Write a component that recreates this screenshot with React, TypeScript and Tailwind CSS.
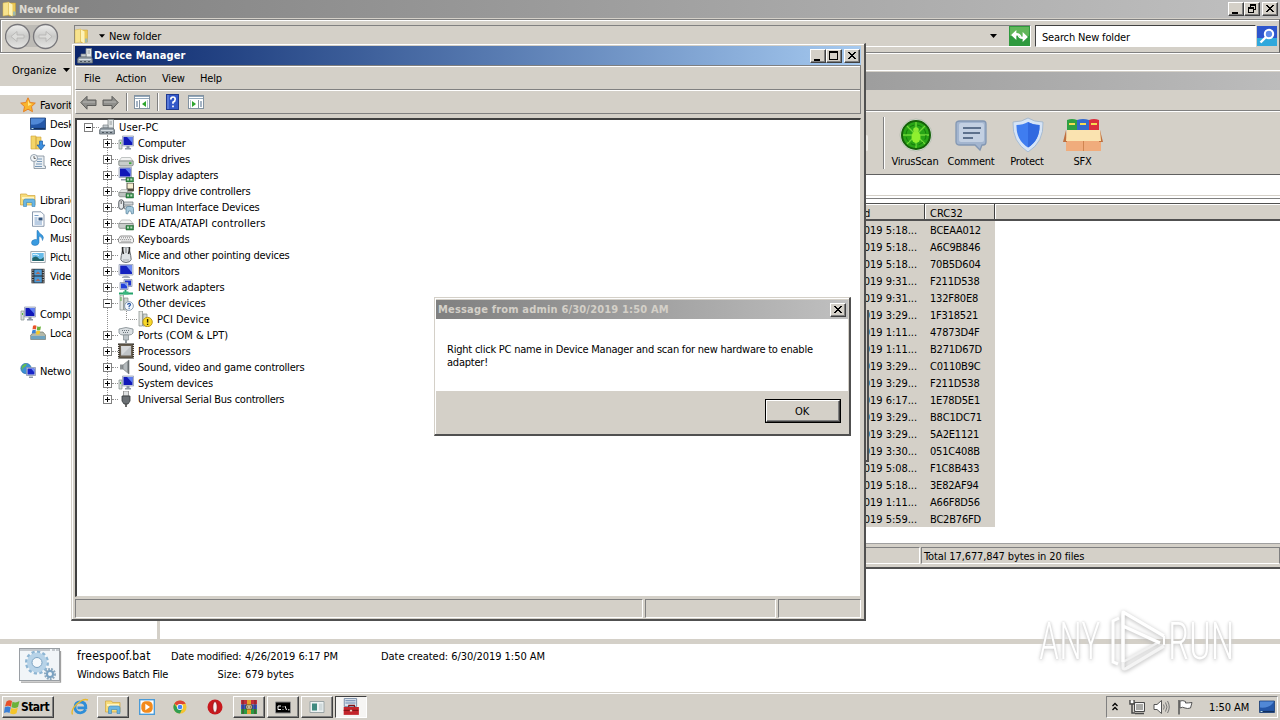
import type { ReactNode } from "react";

type IconProps = { className?: string };
type Glyph = (p: IconProps) => ReactNode;

const S = ({ children, className = "", box = "0 0 16 16" }: { children: ReactNode; className?: string; box?: string }) => (
  <svg viewBox={box} className={`block shrink-0 ${className || "h-4 w-4"}`}>
    {children}
  </svg>
);

/* ---------- small icons ---------- */

const FolderTall: Glyph = (p) => (
  <S {...p}>
    <path d="M1 2l6-1v13l-6 1z" fill="#f7e38e" stroke="#d9b547" strokeWidth=".5" />
    <path d="M7 2h6.500v12L7 15z" fill="#ecc957" stroke="#c99e2f" strokeWidth=".5" />
    <path d="M7 1.500l3.500 2v12l-3.500-2z" fill="#fdf3b8" />
    <path d="M11 10.500h2.500v4H11z" fill="#9cb9b0" />
  </S>
);
const Tower: Glyph = (p) => (
  <S {...p}>
    <path d="M9 .5h5.500V10H9z" fill="#e4e8e8" stroke="#7d8788" strokeWidth=".8" />
    <path d="M10.500 3h2.500M10.500 5h2.500" stroke="#7d8788" strokeWidth=".8" />
    <path d="M4 6h5v3H4z" fill="#c5ccd0" stroke="#7b8388" strokeWidth=".7" />
    <path d="M2 9h12l1.500 2v4H.6v-4z" fill="#99a3ab" stroke="#5d676e" strokeWidth=".8" />
    <path d="M2 11.500h12" stroke="#d9e0e4" />
    <path d="M3 13.500h2M7 13.500h2M11 13.500h2" stroke="#4c565e" />
  </S>
);
const Pc: Glyph = (p) => (
  <S {...p}>
    <path d="M1 5h3v9H1z" fill="#d8dedb" stroke="#84908d" strokeWidth=".7" />
    <path d="M2 7h1v2H2z" fill="#55bb3c" />
    <path d="M4.500 1h11v10h-11z" fill="#d5dbe8" stroke="#8d97ad" strokeWidth=".7" />
    <path d="M5.500 2h9v8h-9z" fill="#1018b8" />
    <path d="M9 2h5.500v6z" fill="#5c7df2" />
    <path d="M8.500 11h3v2h-3zM7 13h6v1.400H7z" fill="#8e99a8" />
  </S>
);
const Disk: Glyph = (p) => (
  <S {...p}>
    <path d="M3.500 6.500h9L15 10H1z" fill="#f2f3f2" stroke="#9aa09f" strokeWidth=".6" />
    <path d="M.8 10h14.400v4l-1 1H1.800l-1-1z" fill="#c9cdcb" stroke="#777d7b" strokeWidth=".8" />
    <path d="M11 11.300h2.500v1.800H11z" fill="#3ca53a" />
  </S>
);
const Card = () => (
  <g>
    <path d="M8 10.500h7.500V15H8z" fill="#2e8b45" stroke="#1c5b2b" strokeWidth=".5" />
    <path d="M9 11.500h2v2H9zM12.300 11.500h2v2h-2z" fill="#b9d8bd" />
  </g>
);
const Display: Glyph = (p) => (
  <S {...p}>
    <path d="M1 .5h12.500v10H1z" fill="#d5dbe8" stroke="#8d97ad" strokeWidth=".7" />
    <path d="M2 1.500h10.500v8H2z" fill="#1018b8" />
    <path d="M7 1.500h5.500v6z" fill="#5c7df2" />
    <path d="M3 12h6v1.500H3z" fill="#8e99a8" />
    <Card />
  </S>
);
const Floppy: Glyph = (p) => (
  <S {...p}>
    <path d="M9 0h6.500v8H9z" fill="#f5edcf" stroke="#4d4a40" strokeWidth=".9" />
    <path d="M9 5.500h6.500V8H9z" fill="#4d4a40" />
    <path d="M3.500 6.500h6v3H1z" fill="#e4e6e5" stroke="#9aa09f" strokeWidth=".5" />
    <path d="M.8 9.500h13V13l-1 .8h-11l-1-.8z" fill="#bdc2c0" stroke="#777d7b" strokeWidth=".7" />
    <Card />
  </S>
);
const Hid: Glyph = (p) => (
  <S {...p}>
    <rect x=".8" y=".8" width="4.800" height="9.500" rx="2.400" fill="#e6e9ec" stroke="#50565c" strokeWidth="1" />
    <path d="M3.200 2v3" stroke="#333" strokeWidth=".8" />
    <path d="M6 3h9v3H6zM6.500 7h6v3h-6z" fill="#d3d7da" stroke="#6c7378" strokeWidth=".7" />
    <path d="M8 14.500V9.500q0-2 2-2h3.500q2 0 2 2v5l-1.800.5-1-3h-2l-1 3z" fill="#a7c9dc" stroke="#54819b" strokeWidth=".7" />
  </S>
);
const Ide: Glyph = (p) => (
  <S {...p}>
    <path d="M3.500 5h8.500l3 3.500H1z" fill="#f2f3f2" stroke="#9aa09f" strokeWidth=".6" />
    <path d="M.8 8.500h14.400v4l-1 .8H1.800l-1-.8z" fill="#c9cdcb" stroke="#777d7b" strokeWidth=".7" />
    <Card />
  </S>
);
const Keyb: Glyph = (p) => (
  <S {...p}>
    <path d="M2.500 5h11L15.500 8v3l-1 .8h-13l-1-.8V8z" fill="#f2f2f2" stroke="#777" strokeWidth=".8" />
    <path d="M3 6.800h10M2.200 8.600h11.600" stroke="#777" strokeWidth=".9" strokeDasharray="1 1" />
    <path d="M3 10.300h10" stroke="#999" strokeWidth=".7" />
  </S>
);
const Mouse: Glyph = (p) => (
  <S {...p}>
    <path d="M4.500 0v3Q3 9 2.800 12.500q1 3 5.200 3t5.200-3Q13 9 11.500 3V0z" fill="#dfe3e6" stroke="#5a5f64" strokeWidth=".9" />
    <path d="M4.600 0q-.3 4 .9 7M11.400 0q.3 4-.9 7" fill="none" stroke="#2a2a2a" strokeWidth="1.600" />
    <path d="M8 1v5" stroke="#777" />
    <path d="M5 13h6" stroke="#a9aeb2" />
  </S>
);
const Monitor: Glyph = (p) => (
  <S {...p}>
    <path d="M1 1.500h14v10.500H1z" fill="#dfe5f0" stroke="#8d97ad" strokeWidth=".7" />
    <path d="M2.200 2.500h11.800V11H2.200z" fill="#1422c0" />
    <path d="M8 2.500h6v7z" fill="#6f8df5" />
    <path d="M4 14q4-3 8 0v1H4z" fill="#a3adbb" />
  </S>
);
const NetAd: Glyph = (p) => (
  <S {...p}>
    <path d="M6 .5h8v7H6z" fill="#d5dbe8" stroke="#7f8ba5" strokeWidth=".7" />
    <path d="M7 1.500h6v5H7z" fill="#1f35cf" />
    <path d="M2 3.500h8v7H2z" fill="#d5dbe8" stroke="#7f8ba5" strokeWidth=".7" />
    <path d="M3 4.500h6v5H3z" fill="#2240d8" />
    <path d="M6 4.500h3v3z" fill="#7d9cf8" />
    <path d="M7.500 11v2M1 14.500h14" stroke="#25a36b" strokeWidth="1.800" />
    <path d="M5 12.500h5.500v3H5z" fill="#39b780" />
  </S>
);
const Other: Glyph = (p) => (
  <S {...p}>
    <path d="M2 0h3.500v15H2z" fill="#e3e6e4" stroke="#818a87" strokeWidth=".7" />
    <path d="M6 3h4v12H6z" fill="#cfd6d3" stroke="#818a87" strokeWidth=".7" />
    <path d="M3 2v4" stroke="#56b246" />
    <circle cx="11" cy="11" r="4.400" fill="#f3f8fd" stroke="#7a8da5" strokeWidth=".8" />
    <path d="M9.600 9.900q.2-1.500 1.500-1.500t1.400 1.200q0 .9-1.400 1.700v.6M11.100 12.700v1" stroke="#2a58a8" strokeWidth="1.200" fill="none" />
  </S>
);
const Warn: Glyph = (p) => (
  <S {...p}>
    <path d="M2 0h3.500v15H2z" fill="#e3e6e4" stroke="#818a87" strokeWidth=".7" />
    <path d="M6 3h4v12H6z" fill="#cfd6d3" stroke="#818a87" strokeWidth=".7" />
    <circle cx="10.600" cy="11" r="4.700" fill="#f8d92a" stroke="#b58f14" strokeWidth=".9" />
    <path d="M10.600 8v3.500M10.600 12.700v1.200" stroke="#2a2200" strokeWidth="1.400" />
  </S>
);
const Port: Glyph = (p) => (
  <S {...p}>
    <path d="M1 2q7-3 14 0v4q-1 2-4 2H5Q2 8 1 6z" fill="#d9dee1" stroke="#7f888d" strokeWidth=".8" />
    <path d="M4 3.500h8M5 5.500h6" stroke="#69737a" strokeDasharray="1 1" />
    <path d="M5.500 8h5v5h-5z" fill="#bfc6ca" stroke="#7f888d" strokeWidth=".7" />
    <path d="M7 13h2v3H7z" fill="#8e979c" />
  </S>
);
const Cpu: Glyph = (p) => (
  <S {...p}>
    <path d="M.8 1h14.400v14H.8z" fill="#6a6052" />
    <path d="M.5 .8h15M.5 15.200h15M.8 1v14M15.200 1v14" stroke="#29241d" strokeWidth="1.400" strokeDasharray="1 1" />
    <path d="M3 3h10v9.500H3z" fill="#bfc3c6" />
    <path d="M3 3h10L4 12z" fill="#d6d8da" />
  </S>
);
const Speaker: Glyph = (p) => (
  <S {...p}>
    <path d="M2 5.500h3v5H2z" fill="#8d9295" />
    <path d="M5 6l6-5v14l-6-5z" fill="#b4babd" stroke="#6d7376" strokeWidth=".6" />
    <path d="M9.500 3L11 1v14l-1.500-2z" fill="#676d70" />
  </S>
);
const Usb: Glyph = (p) => (
  <S {...p}>
    <path d="M5.500 0h5v5h-5z" fill="#dfe1e2" stroke="#777" strokeWidth=".7" />
    <path d="M4 5h8v5l-2 3H6l-2-3z" fill="#6a6f73" stroke="#34383b" strokeWidth=".8" />
    <path d="M7.200 13h1.600v3H7.200z" fill="#444" />
  </S>
);
const Star: Glyph = (p) => (
  <S {...p}>
    <path d="M8 .8l2.200 4.700 5.100.6-3.800 3.500 1 5.100L8 12.200l-4.500 2.500 1-5.100L.7 6.100l5.100-.6z" fill="#f9b52c" stroke="#e5791b" strokeWidth=".9" />
    <path d="M8 3l1.300 3.300L12 7 8 9z" fill="#ffe787" />
  </S>
);
const Desk: Glyph = (p) => (
  <S {...p}>
    <path d="M.5 2h15v11.500H.5z" fill="#2457a8" stroke="#193c72" strokeWidth=".8" />
    <path d="M1 2.500h14q-4 7-14 6z" fill="#5088d6" />
    <path d="M1 12.500h14" stroke="#11305f" strokeWidth="1.200" />
    <path d="M1.500 12.500h2" stroke="#b8e0f0" />
  </S>
);
const Down: Glyph = (p) => (
  <S {...p}>
    <path d="M1 1h5v13H1zM6 2h5v12H6z" fill="#f4d568" stroke="#cda13a" strokeWidth=".6" />
    <path d="M9.500 6h3v4h2.500L11 15 7 10h2.500z" fill="#3d8fdf" stroke="#1d5ca2" strokeWidth=".7" />
  </S>
);
const Recent: Glyph = (p) => (
  <S {...p}>
    <path d="M4 2h10v10h1.500v2.500H4z" fill="#e9eef2" stroke="#7d8b97" strokeWidth=".8" />
    <path d="M7 5h5M7 7.500h5M6 10h6M5 12.500h7" stroke="#6a8cb0" strokeWidth=".9" />
    <circle cx="4" cy="4" r="3.500" fill="#f4f7f9" stroke="#8d9ba7" strokeWidth=".9" />
    <path d="M4 2v2.400h1.800" stroke="#444" strokeWidth=".8" fill="none" />
  </S>
);
const Lib: Glyph = (p) => (
  <S {...p}>
    <path d="M.5 2h6l1 1.500h7.500V13H.5z" fill="#f7dc7a" stroke="#cfa33c" strokeWidth=".7" />
    <path d="M2 5h12v2H2z" fill="#fff4c0" />
    <path d="M3.500 14.500V9q0-2 2-2H13q2 0 2 2v5.500h-3v-4H6.500v4z" fill="#69b5e3" stroke="#3b85b5" strokeWidth=".6" />
  </S>
);
const Doc: Glyph = (p) => (
  <S {...p}>
    <path d="M2.500 .8h8.500l3 3v11.500H2.500z" fill="#fafcfe" stroke="#6f8299" strokeWidth=".8" />
    <path d="M4.500 4.500h4M4.500 7h3M4.500 9h3M4.500 11h7.500M4.500 13h7.500" stroke="#6b93c2" strokeWidth=".9" />
    <path d="M8.500 6.500h4v3h-4z" fill="#31547e" />
  </S>
);
const Music: Glyph = (p) => (
  <S {...p}>
    <path d="M8 .5q1 3 4 4.500 2.500 2 .5 5.500 .3-3-3.500-4.500v6.500q-.5 3-4 3t-3.500-2.700T4.800 9.500q1.700-.2 2.200.3V.5z" fill="#3a9be0" stroke="#1b6db0" strokeWidth=".5" />
  </S>
);
const Pics: Glyph = (p) => (
  <S {...p}>
    <path d="M.8 2.500h14.400v11H.8z" fill="#fff" stroke="#8a949c" strokeWidth=".8" />
    <path d="M2.300 4h11.400v8H2.300z" fill="#67bbe9" />
    <path d="M2.300 9q4-3 6 0t5.400-1v4H2.300z" fill="#23656b" />
    <path d="M3 5.500q3-1 6 1" stroke="#e6f7ff" fill="none" />
  </S>
);
const Film: Glyph = (p) => (
  <S {...p}>
    <path d="M1.500 .8h13v14.500h-13z" fill="#26282b" />
    <path d="M4.300 1.500h7.500v6H4.300zM4.300 8.500h7.500v6H4.300z" fill="#4c9ad6" />
    <path d="M5.500 6l2.500-2.500L10.500 6zM5.500 13L8 10.500l2.500 2.500z" fill="#a86a5c" />
    <path d="M2.900 1.500v13M13.200 1.500v13" stroke="#f2f2f2" strokeDasharray="1.200 1.200" />
  </S>
);
const Local: Glyph = (p) => (
  <S {...p}>
    <path d="M2 9l3-2h8l2.500 3v4.500H.7V10z" fill="#b4b9a9" stroke="#71766a" strokeWidth=".7" />
    <path d="M1 11h14.200v3.200H1z" fill="#6fa3c0" />
    <path d="M3 .8q2-1 3.500 0L6 4.500q-2-1-3.500 0z" fill="#e8542a" />
    <path d="M7.300 1.300q2 1 3.700 0L10.300 5q-2 1-3.500 0z" fill="#6bb33a" />
    <path d="M2.400 5.200q2-1 3.500 0L5.200 8.500q-2-1-3.500 0z" fill="#3a83d6" />
    <path d="M6.600 5.600q2 1 3.700 0L9.500 9q-2 1-3.500 0z" fill="#f6c92c" />
  </S>
);
const Net: Glyph = (p) => (
  <S {...p}>
    <circle cx="6" cy="5.500" r="5.200" fill="#3c8fd6" stroke="#2566a3" strokeWidth=".6" />
    <path d="M2 3q3-3 5-2-1 3-3 3.500T2.500 8Q.8 6 2 3zM7 6l3-1v3l-3 2z" fill="#62bb55" />
    <path d="M6.500 4.500h9v8h-9z" fill="#d5dbe8" stroke="#7f8ba5" strokeWidth=".7" />
    <path d="M7.500 5.500h7v6h-7z" fill="#1725c8" />
    <path d="M11 5.500h3.500v4z" fill="#6f8df5" />
    <path d="M9 13.500h4V15H9z" fill="#8e99a8" />
  </S>
);

/* ---------- window chrome ---------- */

const btn = "flex items-center justify-center bg-[#d4d0c8] border border-t-white border-l-white border-r-[#404040] border-b-[#404040] shadow-[inset_-1px_-1px_0_#808080]";

const CapBtn = ({ kind, className = "" }: { kind: "min" | "max" | "restore" | "close"; className?: string }) => (
  <div className={`${btn} h-[14px] w-4 ${className}`}>
    <svg viewBox="0 0 14 12" className="h-3 w-[14px]" shapeRendering="crispEdges">
      {kind === "min" && <path d="M3 9h6v2H3z" />}
      {kind === "max" && <path d="M2 1h9v9H2zM3 3v6h7V3z" fillRule="evenodd" />}
      {kind === "restore" && <path d="M5 1h6v6H9v3H3V4h2zM6 3v1h3v2h1V3zM4 6v3h4V6z" fillRule="evenodd" />}
      {kind === "close" && <path d="M3 2h2v1h1v1h2V3h1V2h2v1h-1v1H9v1H8v1h1v1h1v1h1v1H9V8H8V7H6v1H5v1H3V8h1V7h1V6h1V5H5V4H4V3H3z" />}
    </svg>
  </div>
);

const Caret = ({ className = "" }: { className?: string }) => (
  <svg viewBox="0 0 7 4" className={`block shrink-0 ${className}`}>
    <path d="M0 0h7L3.500 4z" />
  </svg>
);

/* ---------- data ---------- */

const nav: { icon: Glyph; label: string; top?: boolean; hot?: boolean; gap?: string }[] = [
  { icon: Star, label: "Favorites", top: true, hot: true },
  { icon: Desk, label: "Desktop" },
  { icon: Down, label: "Downloads" },
  { icon: Recent, label: "Recent Places" },
  { icon: Lib, label: "Libraries", top: true, gap: "mt-[19px]" },
  { icon: Doc, label: "Documents" },
  { icon: Music, label: "Music" },
  { icon: Pics, label: "Pictures" },
  { icon: Film, label: "Videos" },
  { icon: Pc, label: "Computer", top: true, gap: "mt-[19px]" },
  { icon: Local, label: "Local Disk (C:)" },
  { icon: Net, label: "Network", top: true, gap: "mt-[19px]" },
];

const tree: { icon: Glyph; label: string; open?: boolean; track?: string }[] = [
  { icon: Pc, label: "Computer" },
  { icon: Disk, label: "Disk drives", track: "tracking-[-0.25px]" },
  { icon: Display, label: "Display adapters" },
  { icon: Floppy, label: "Floppy drive controllers", track: "tracking-[-0.17px]" },
  { icon: Hid, label: "Human Interface Devices", track: "tracking-[-0.16px]" },
  { icon: Ide, label: "IDE ATA/ATAPI controllers", track: "tracking-[0.17px]" },
  { icon: Keyb, label: "Keyboards", track: "tracking-normal" },
  { icon: Mouse, label: "Mice and other pointing devices", track: "tracking-[-0.23px]" },
  { icon: Monitor, label: "Monitors", track: "tracking-[-0.15px]" },
  { icon: NetAd, label: "Network adapters", track: "tracking-[-0.12px]" },
  { icon: Other, label: "Other devices", open: true, track: "tracking-[-0.1px]" },
  { icon: Port, label: "Ports (COM & LPT)", track: "tracking-[-0.02px]" },
  { icon: Cpu, label: "Processors", track: "tracking-normal" },
  { icon: Speaker, label: "Sound, video and game controllers" },
  { icon: Pc, label: "System devices" },
  { icon: Usb, label: "Universal Serial Bus controllers", track: "tracking-[-0.25px]" },
];

const crc: [string, string][] = [
  ["5:18", "BCEAA012"], ["5:18", "A6C9B846"], ["5:18", "70B5D604"], ["9:31", "F211D538"], ["9:31", "132F80E8"],
  ["3:29", "1F318521"], ["1:11", "47873D4F"], ["1:11", "B271D67D"], ["3:29", "C0110B9C"], ["3:29", "F211D538"],
  ["6:17", "1E78D5E1"], ["3:29", "B8C1DC71"], ["3:29", "5A2E1121"], ["3:30", "051C408B"], ["5:08", "F1C8B433"],
  ["5:18", "3E82AF94"], ["1:11", "A66F8D56"], ["5:59", "BC2B76FD"],
];

const Expander = ({ open }: { open?: boolean }) => (
  <svg viewBox="0 0 9 9" className="block h-[9px] w-[9px] shrink-0 bg-white" shapeRendering="crispEdges">
    <path d="M0 0h9v9H0zM1 1v7h7V1z" fill="#808080" fillRule="evenodd" />
    <path d={open ? "M2 4h5v1H2z" : "M2 4h2V2h1v2h2v1H5v2H4V5H2z"} />
  </svg>
);

/* ---------- windows ---------- */

const Explorer = () => (
  <div className="flex h-[692px] w-[1280px] flex-col bg-[#d4d0c8]">
    <div className="flex h-[18px] items-center bg-linear-to-r from-[#808080] to-[#c0c0c0] pr-[2px] pl-[2px]">
      <FolderTall className="h-4 w-4" />
      <span className="ml-px text-[11px] font-bold tracking-[-0.1px] text-[#dedad2]">New folder</span>
      <div className="ml-auto flex">
        <CapBtn kind="min" />
        <CapBtn kind="restore" />
        <CapBtn kind="close" className="ml-[2px]" />
      </div>
    </div>
    <div className="mt-px flex h-[34px] items-center border border-[#808080] border-r-[#606060] border-b-[#808080] pl-1 shadow-[inset_1px_1px_0_#fff]">
      <svg viewBox="0 0 54 28" className="h-7 w-[54px] shrink-0">
        <defs>
          <linearGradient id="orb" x1="0" y1="0" x2="0" y2="1">
            <stop offset="0" stopColor="#efefee" />
            <stop offset=".5" stopColor="#c9c9c7" />
            <stop offset="1" stopColor="#e6e6e4" />
          </linearGradient>
        </defs>
        <path d="M12 3h30v22H12z" fill="#bdbbb6" />
        {[12.5, 40.5].map((x) => (
          <circle key={x} cx={x} cy="14.500" r="12" fill="url(#orb)" stroke="#77767a" strokeWidth="1.300" />
        ))}
        <path d="M19 13h-7V9.500l-6 5 6 5V16h7zM34 13h7V9.500l6 5-6 5V16h-7z" fill="#dcdcda" stroke="#b4b3b1" strokeWidth=".8" />
      </svg>
      <div className="ml-[15px] flex h-[22px] w-[957px] items-center border border-[#808080] border-r-white border-b-white">
        <FolderTall className="-ml-px h-4 w-4" />
        <Caret className="ml-[9px] h-1 w-[6px]" />
        <span className="ml-[4px] tracking-[-0.12px]">New folder</span>
        <Caret className="mr-[11px] ml-auto h-1 w-[9px]" />
        <svg viewBox="0 0 20 20" className="h-5 w-[21px] shrink-0" preserveAspectRatio="none">
          <rect width="20" height="20" fill="#2f9a3e" />
          <rect x="1" y="1" width="18" height="9" fill="#61b65a" />
          <path d="M2 9l5-5v3q4 0 5 4-2-2-5-1.500V14zM18 11l-5 5v-3q-4 0-5-4 2 2 5 1.500V6z" fill="#fff" />
        </svg>
      </div>
      <div className="ml-[4px] flex h-[22px] w-[221px] items-center border border-[#404040] border-r-white border-b-white bg-white pt-[2px] pl-[6px] tracking-[-0.16px]">
        Search New folder
      </div>
      <svg viewBox="0 0 20 20" className="ml-px h-5 w-5 shrink-0">
        <rect width="20" height="20" fill="#2d55cd" />
        <rect y="12" width="20" height="8" fill="#30a8dc" />
        <circle cx="12" cy="8" r="4.200" fill="#5e8bea" stroke="#fff" strokeWidth="2" />
        <path d="M9 11l-5.500 5.500" stroke="#fff" strokeWidth="2.400" />
      </svg>
    </div>
    <div className="flex h-[33px] items-center border-t border-white pl-3">
      <span className="tracking-normal">Organize</span>
      <Caret className="ml-[7px] h-1 w-[7px]" />
      <div className="mt-2 mr-[14px] ml-auto flex items-center">
        <svg viewBox="0 0 17 10" className="h-[10px] w-[17px]">
          <path d="M1 3h3v3H1z" fill="#fff" stroke="#666" />
          <path d="M6 4.500h4M12 4.500h4" stroke="#666" />
        </svg>
        <svg viewBox="0 0 17 10" className="ml-[34px] h-[10px] w-[17px]">
          <path d="M.5 1h16v9H.5z" fill="#fff" stroke="#4f81b5" />
          <path d="M10 1h6v9h-6z" fill="#9fd3ef" />
        </svg>
        <svg viewBox="0 0 16 16" className="mt-[6px] ml-3 h-4 w-4">
          <circle cx="8" cy="8" r="7.500" fill="#3a67be" stroke="#6f87ad" />
          <path d="M5.500 6q0-2.500 2.500-2.500t2.500 2-2.500 3V10" stroke="#fff" strokeWidth="1.700" fill="none" />
        </svg>
      </div>
    </div>
    <div className="flex flex-1">
      <div className="w-[157px] overflow-hidden bg-white pt-[9px]">
        {nav.map((n) => (
          <div key={n.label} className={`flex h-[19px] items-center whitespace-nowrap ${n.top ? "pl-5" : "pl-[30px]"} ${n.hot ? "bg-[#d4d0c8]" : ""} ${n.gap ?? ""}`}>
            <n.icon />
            <span className="ml-1 pt-px">{n.label}</span>
          </div>
        ))}
      </div>
      <div className="w-[3px] bg-[#d4d0c8]" />
      <div className="flex-1 bg-white" />
    </div>
    <div className="h-[5px] bg-[#d4d0c8]" />
    <div className="flex h-12 bg-white pl-[18px]">
      <svg viewBox="0 0 44 36" className="mt-[3px] h-9 w-11 shrink-0">
        <path d="M3 35.200h39.500V4" stroke="#a0a0a0" strokeWidth="1.300" fill="none" />
        <rect x="1.500" y="1.500" width="40" height="32" fill="#f1f5f8" stroke="#9a9fa4" />
        <path d="M2 3h39" stroke="#b5bbc0" strokeWidth="1.500" strokeDasharray="30 2 3 1" />
        <circle cx="19" cy="15.500" r="10" fill="none" stroke="#8db5d3" strokeWidth="4" strokeDasharray="3 2.200" />
        <circle cx="19" cy="15.500" r="7.500" fill="none" stroke="#b7d3e8" strokeWidth="5" />
        <circle cx="19" cy="15.500" r="5" fill="#f4f8fb" stroke="#7aa2c2" />
        <circle cx="32" cy="27" r="4.500" fill="none" stroke="#8ca8be" strokeWidth="3" strokeDasharray="1.700 1" />
        <circle cx="32" cy="27" r="3" fill="#f4f8fb" stroke="#7aa2c2" strokeWidth="2" />
      </svg>
      <div className="ml-[15px] w-[94px] whitespace-nowrap">
        <div className="mt-[3px] h-[19px] text-[12px] leading-[18px] tracking-[0.2px]">freespoof.bat</div>
        <div className="h-[18px] leading-[18px] tracking-[-0.24px]">Windows Batch File</div>
      </div>
      <div className="mt-[4px] grid h-9 grid-cols-[70px_132px_auto] grid-rows-[18px_18px] gap-x-1 leading-[18px] tracking-[-0.05px] whitespace-nowrap">
        <span className="tracking-[-0.22px]">Date modified:</span>
        <span>4/26/2019 6:17 PM</span>
        <span>Date created: 6/30/2019 1:50 AM</span>
        <span className="text-right">Size:</span>
        <span>679 bytes</span>
      </div>
    </div>
  </div>
);

const Tool = ({ label, w, children }: { label: string; w: string; children: ReactNode }) => (
  <div className={`flex flex-col items-center ${w}`}>
    <svg viewBox="0 0 40 36" className="h-9 w-10">{children}</svg>
    <span className="mt-[3px] whitespace-nowrap">{label}</span>
  </div>
);

const WinRar = () => (
  <div className="flex h-[500px] w-[480px] flex-col border-b-2 border-[#505050] bg-[#d4d0c8]">
    <div className="mt-px h-px bg-white" />
    <div className="mt-px h-[18px] bg-linear-to-r from-[#999999] to-[#bcbcbc]" />
    <div className="h-[21px] border-b border-[#808080]" />
    <div className="flex h-[64px] border-t border-b border-t-white border-b-[#606060] pt-[4px]">
      <div className="flex h-[54px] w-[85px] items-center justify-end">
        <div className="mr-[15px] h-4 w-[3px] rounded-sm bg-[#eceae6]" />
        <div className="h-[52px] w-[2px] border-r border-l border-r-white border-l-[#808080]" />
      </div>
      <div className="flex pl-[3px]">
        <Tool label="VirusScan" w="w-[54px]">
          <circle cx="21" cy="19" r="16" fill="#dfe8dc" stroke="#a9b3a5" strokeWidth=".7" />
          <circle cx="21" cy="19" r="14" fill="#28a516" stroke="#156009" strokeWidth="2" />
          <path d="M21 6v26M8 19h26M12 10l18 18M30 10L12 28" stroke="#6fd838" strokeWidth="1.300" />
          <ellipse cx="21" cy="21" rx="4.500" ry="6" fill="#8ff02f" />
          <circle cx="21" cy="14" r="2.800" fill="#8ce934" />
          <circle cx="21" cy="19" r="10" fill="none" stroke="#167a0a" strokeWidth="1" strokeDasharray="5 3" />
        </Tool>
        <Tool label="Comment" w="w-[58px]">
          <path d="M9 5h23q3 0 3 3v18q0 3-3 3h-1l-2 5-5-5H9q-4 0-4-3V8q0-3 4-3z" fill="#a3b5cf" stroke="#8397b3" strokeWidth="1.300" />
          <path d="M10 7h21q2 0 2 2v15q0 2-2 2H10q-2 0-2-2V9q0-2 2-2z" fill="#c3d0e2" />
          <path d="M12 12h18M12 17h17M12 22h10" stroke="#3d5272" strokeWidth="1.400" />
        </Tool>
        <Tool label="Protect" w="w-[54px]">
          <path d="M21 2q6 4 15 4 1 20-15 30Q5 26 6 6q9 0 15-4z" fill="#d6e4f6" stroke="#9bb2cd" strokeWidth=".8" />
          <path d="M21 6q5 3 11.500 3Q33 24 21 31.500 9 24 9.500 9 16 9 21 6z" fill="#3f7df0" />
          <path d="M21 6q5 3 11.500 3Q33 24 21 31.500z" fill="#3069e0" />
        </Tool>
        <Tool label="SFX" w="w-[57px]">
          <path d="M4 4q5-2 10 0v12H4z" fill="#2fa043" />
          <path d="M14 4q6-2 12 0v12H14z" fill="#3469cd" />
          <path d="M26 4q5-2 10 0v12H26z" fill="#db2f3d" />
          <path d="M6 8h6M17 8h6M28 8h6" stroke="#f5db52" strokeWidth="2" />
          <path d="M3 21h35v14H3z" fill="#f0ac7c" />
          <path d="M3 14L0 26h4zM37 14l3 12h-4z" fill="#c0703f" />
          <path d="M4 14h33l1 11H3z" fill="#fae3b0" />
          <path d="M20.500 25v10" stroke="#d08550" />
        </Tool>
      </div>
    </div>
    <div className="h-[20px] bg-white" />
    <div className="h-px bg-[#d4d0c8]" />
    <div className="h-[2px] bg-white" />
    <div className="h-px bg-[#808080]" />
    <div className="h-[4px] bg-white" />
    <div className="flex h-[18px] border-t border-b-2 border-[#505050] shadow-[inset_0_1px_0_#fff]">
      <div className="w-[125px] border-r border-[#404040] pl-[64px] leading-[19px]">d</div>
      <div className="w-[70px] border-r border-l border-r-[#404040] border-l-white pl-[4px] leading-[19px] tracking-normal">CRC32</div>
      <div className="flex-1 border-l border-white" />
    </div>
    <div className="h-[322px] bg-white">
      <div className="w-[195px] bg-[#d4d0c8]">
        {crc.map(([t, c], i) => (
          <div key={i} className="flex h-[17px] items-center pt-px tracking-[-0.05px] whitespace-nowrap">
            <span className="w-[117px] text-right">/2019 {t}...</span>
            <span className="ml-[13px] tracking-[-0.2px]">{c}</span>
          </div>
        ))}
      </div>
    </div>
    <div className="flex flex-1 items-stretch border-t border-[#a0a0a0] py-[3px]">
      <div className="w-[120px] border border-[#808080] border-r-white border-b-white" />
      <div className="ml-px flex flex-1 items-center border border-[#808080] border-b-white pt-px pl-[2px] tracking-[-0.12px]">
        Total 17,677,847 bytes in 20 files
      </div>
    </div>
  </div>
);

const Arrow = ({ flip }: { flip?: boolean }) => (
  <svg viewBox="0 0 17 15" className={`h-[15px] w-[17px] ${flip ? "-scale-x-100" : ""}`}>
    <path d="M.8 7.500L7 1.300V5h9v5.500H7v3.700z" fill="#8f8f8c" stroke="#5d5d5b" strokeWidth="1" />
    <path d="M3 7h12" stroke="#b8b8b5" />
  </svg>
);
const Pane = ({ flip }: { flip?: boolean }) => (
  <svg viewBox="0 0 16 14" className={`h-[14px] w-4 ${flip ? "-scale-x-100" : ""}`}>
    <rect x=".5" y=".5" width="15" height="13" fill="#fff" stroke="#8292a0" />
    <path d="M1 1.500h14M1 3.500h14" stroke="#93a8bb" strokeWidth="1.200" />
    <path d="M5.500 5v8" stroke="#8292a0" />
    <path d="M2 7h2M2 9h2M2 11h2" stroke="#4d6a8a" />
    <path d="M12 6v6L8 9z" fill="#2da52d" />
    <path d="M13.500 5v8" stroke="#b7c6d2" />
  </svg>
);

const DeviceManager = () => (
  <div className="flex h-[578px] w-[795px] flex-col border border-[#d4d0c8] border-r-2 border-r-[#505050] border-b-2 border-b-[#505050] bg-[#d4d0c8] pt-[2px] pr-[3px] pb-px pl-[3px] shadow-[inset_1px_1px_0_#fff]">
    <div className="flex h-[19px] items-center bg-linear-to-r from-[#0a246a] to-[#a6caf0] pr-px pl-[2px]">
      <Tower className="h-4 w-4" />
      <span className="ml-px text-[11px] font-bold tracking-[0.13px] text-white">Device Manager</span>
      <div className="ml-auto flex">
        <CapBtn kind="min" />
        <CapBtn kind="max" />
        <CapBtn kind="close" className="ml-[2px]" />
      </div>
    </div>
    <div className="flex h-[25px] items-center border border-[#808080] border-l-white pt-px pl-2 tracking-normal shadow-[inset_0_1px_0_#fff]">
      <span className="w-8">File</span>
      <span className="w-[46px] tracking-[-0.1px]">Action</span>
      <span className="w-[38px] tracking-[-0.2px]">View</span>
      <span className="tracking-[-0.2px]">Help</span>
    </div>
    <div className="flex h-[24px] items-center border border-t-0 border-[#808080] border-l-white pt-px pl-[4px] shadow-[inset_0_1px_0_#fff]">
      <Arrow />
      <div className="w-[5px]" />
      <Arrow flip />
      <div className="ml-[7px] h-[18px] w-[2px] border-r border-l border-r-white border-l-[#808080]" />
      <div className="w-[6px]" />
      <Pane />
      <div className="ml-[7px] h-[18px] w-[2px] border-r border-l border-r-white border-l-[#808080]" />
      <svg viewBox="0 0 13 16" className="ml-[7px] h-4 w-[13px]">
        <rect x=".5" y=".5" width="12" height="15" fill="#3358c8" stroke="#1f3990" />
        <path d="M2 1v14" stroke="#7f9bea" />
        <path d="M4.800 5.500q0-2.500 2.200-2.500t2.200 2.200-2.200 3v1.600M7 11.500v1.800" stroke="#fff" strokeWidth="1.700" fill="none" />
      </svg>
      <div className="w-[9px]" />
      <Pane flip />
    </div>
    <div className="mt-[4px] flex-1 border-2 border-r border-b border-[#404040] border-r-[#d4d0c8] border-b-[#d4d0c8] bg-white">
      <div className="-mt-px flex h-4 items-center pl-[7px]">
        <Expander open />
        <div className="w-[6px] border-t border-dotted border-[#909090]" />
        <Tower className="h-4 w-4" />
        <span className="ml-1 tracking-[0.2px]">User-PC</span>
      </div>
      <div className="relative pl-[26px]">
        <div className="absolute top-0 bottom-2 left-[30px] border-l border-dotted border-[#909090]" />
        {tree.map((t) => (
          <div key={t.label}>
            <div className="relative flex h-4 items-center whitespace-nowrap">
              <Expander open={t.open} />
              <div className="w-[6px] border-t border-dotted border-[#909090]" />
              <t.icon className="h-4 w-4" />
              <span className={`ml-1 ${t.track ?? "tracking-[-0.2px]"}`}>{t.label}</span>
            </div>
            {t.open && (
              <div className="flex h-4 items-center pl-[23px]">
                <div className="mb-[7px] h-[9px] w-[11px] border-b border-l border-dotted border-[#909090]" />
                <Warn />
                <span className="ml-1 tracking-normal">PCI Device</span>
              </div>
            )}
          </div>
        ))}
      </div>
    </div>
    <div className="mt-[2px] flex h-[19px] gap-[2px]">
      <div className="flex-1 border border-[#808080] border-r-white border-b-white" />
      <div className="w-[131px] border border-[#808080] border-r-white border-b-white" />
      <div className="w-[83px] border border-[#808080] border-r-white border-b-white" />
    </div>
  </div>
);

const Message = () => (
  <div className="flex h-[139px] w-[417px] flex-col border border-[#d4d0c8] border-r-2 border-r-[#505050] border-b-2 border-b-[#505050] bg-[#d4d0c8] p-px shadow-[inset_1px_1px_0_#fff]">
    <div className="mt-px flex h-[19px] items-center bg-linear-to-r from-[#808080] to-[#c0c0c0] pr-[2px] pl-[2px]">
      <span className="text-[11px] font-bold tracking-[0.18px] whitespace-nowrap text-[#d4d0c8]">Message from admin 6/30/2019 1:50 AM</span>
      <CapBtn kind="close" className="ml-auto" />
    </div>
    <div className="h-[72px] bg-white pt-[24px] pl-[11px] leading-[13px] tracking-[-0.22px]">
      Right click PC name in Device Manager and scan for new hardware to enable
      <br />
      adapter!
    </div>
    <div className="flex flex-1 justify-end pt-[8px] pr-[7px]">
      <div className="h-[24px] w-[76px] border border-black">
        <div className={`${btn} h-[22px] w-[74px] pr-[2px]`}>OK</div>
      </div>
    </div>
  </div>
);

/* ---------- taskbar ---------- */

const TaskBtn = ({ children, active }: { children: ReactNode; active?: boolean }) => (
  <div className={active ? "flex h-[22px] w-8 items-center justify-center border border-[#404040] border-r-white border-b-white bg-[#f6f5f3]" : `${btn} h-[22px] w-8`}>
    {children}
  </div>
);

const Taskbar = () => (
  <div className="flex h-7 w-[1280px] items-center border-t border-[#d4d0c8] bg-[#d4d0c8] pl-[2px] shadow-[inset_0_1px_0_#fff]">
    <div className={`${btn} h-[22px] w-[52px] gap-px pt-px pr-[3px]`}>
      <svg viewBox="0 0 16 16" className="h-4 w-4 shrink-0">
        <path d="M2.500 2.500q3-2 5.500-.5L7 7.800Q4.500 6 1 7.500z" fill="#e6502a" />
        <path d="M8.500 2.800q3.500 1.500 7-.8l-1.500 6q-3 2-6.500.3z" fill="#6ab23a" />
        <path d="M.8 8.300q3.300-1.500 6 .2l-1.300 5.500q-2.500-1.500-5.500 0z" fill="#3a7fd6" />
        <path d="M7.300 9q3 1.500 6.500-.3l-1.300 5.500q-3 2-6.500 0z" fill="#f5c52a" />
      </svg>
      <span className="text-[12px] font-bold tracking-[-0.5px]">Start</span>
    </div>
    <div className="ml-[17px] flex items-center">
      <svg viewBox="0 0 18 18" className="h-[18px] w-[18px]">
        <path d="M14.500 11.500q-1.500 3.300-5.300 3.300-5.200 0-5.200-5.500T9.300 4q5.500 0 5.500 5.800H6.500" fill="none" stroke="#2f8ed8" strokeWidth="2.800" />
        <path d="M1.500 16.500Q-.5 12 6 6T17 2" fill="none" stroke="#e8b92d" strokeWidth="1.400" />
      </svg>
      <div className="w-2" />
      <TaskBtn><Lib /></TaskBtn>
      <svg viewBox="0 0 16 16" className="ml-[10px] h-4 w-4">
        <rect x=".7" y=".7" width="14.600" height="14.600" fill="#fff" stroke="#4a9bd8" strokeWidth="1.400" />
        <rect x="2.300" y="2.300" width="11.400" height="11.400" rx="4.500" fill="#f28a1c" />
        <path d="M6.300 4.800L11 8l-4.700 3.200z" fill="#fff" />
      </svg>
      <svg viewBox="0 0 16 16" className="ml-[18px] h-[14px] w-[14px]">
        <circle cx="8" cy="8" r="7.500" fill="#f4c430" />
        <path d="M8 8L1.500 4.250A7.500 7.500 0 0 1 14.500 4.250L8 5z" fill="#dd4437" />
        <path d="M1.500 4.250A7.500 7.500 0 0 0 8 15.500L11 9 5 9z" fill="#2f9e52" />
        <circle cx="8" cy="8" r="3.500" fill="#fff" />
        <circle cx="8" cy="8" r="2.700" fill="#4285f4" />
      </svg>
      <svg viewBox="0 0 16 16" className="ml-[20px] h-4 w-4">
        <circle cx="8" cy="8" r="7.500" fill="#c8181d" />
        <ellipse cx="8" cy="8" rx="2.200" ry="5.500" fill="#f6eeee" stroke="#8f0d10" strokeWidth=".8" />
      </svg>
      <div className="ml-[10px] flex gap-[2px]">
        <TaskBtn>
          <S>
            <path d="M0 1h16v4.500H0z" fill="#c32f3b" />
            <path d="M0 5.500h16v4.500H0z" fill="#3159c6" />
            <path d="M0 10h16v5H0z" fill="#2b9a44" />
            <path d="M6 1h4v14H6z" fill="#e3a32c" />
            <path d="M5 6h6v4H5z" fill="#f8efd0" stroke="#4a3510" strokeWidth=".8" />
            <path d="M6.500 7v2M8 7v2M9.500 7v2" stroke="#4a3510" strokeWidth=".6" />
            <path d="M2 1v14M14 1v14" stroke="#591f2a" strokeWidth=".8" />
          </S>
        </TaskBtn>
        <TaskBtn>
          <S>
            <path d="M.5 3h15v11H.5z" fill="#000" stroke="#888" />
            <path d="M6 7H3v3.500h3M8 7.500v.8M8 10v.8M10 7l1.500 4M13 10.800h1.500" stroke="#fff" fill="none" />
          </S>
        </TaskBtn>
        <TaskBtn>
          <S>
            <path d="M1 2.500h14v11H1z" fill="#eef3f3" stroke="#9ba5a6" />
            <path d="M3 4.500h5v7H3z" fill="#3f8a80" />
            <path d="M10 4.500h3.500v7H10z" fill="#cfd9da" />
          </S>
        </TaskBtn>
        <TaskBtn active>
          <S className="h-[18px] w-[18px]">
            <path d="M2 .5h11v7H2z" fill="#dfe6ee" stroke="#7086a3" strokeWidth=".8" />
            <path d="M3 2.500h9M3 4.500h9" stroke="#6784ad" strokeWidth=".9" />
            <path d="M1.500 8h13.500v7h-13.500z" fill="#c3242a" />
            <path d="M6 8V6.500h5V8" stroke="#7d1216" fill="none" />
            <path d="M1.500 11h13" stroke="#821317" />
            <path d="M7 10.500h2v1.500H7z" fill="#e9d5c6" />
          </S>
        </TaskBtn>
      </div>
    </div>
    <div className="mr-[2px] ml-auto flex h-[22px] w-[172px] items-center border border-[#808080] border-r-white border-b-white pl-[5px]">
      <svg viewBox="0 0 6 9" className="h-[9px] w-[6px]">
        <path d="M.5 4L3 1.500 5.500 4M.5 8L3 5.500 5.500 8" fill="none" stroke="#000" strokeWidth="1.300" />
      </svg>
      <svg viewBox="0 0 16 16" className="ml-[11px] h-4 w-4">
        <path d="M5.500 3.500h10v9h-10z" fill="#a9a9a6" stroke="#4a4a4a" />
        <path d="M6.500 4.500h8v7h-8z" fill="none" stroke="#fff" strokeWidth=".9" />
        <path d="M6 14.500h9" stroke="#4a4a4a" strokeWidth="1.500" />
        <path d="M1 1v4h4V1M3 5v9h3" fill="none" stroke="#4a4a4a" strokeWidth="1.500" />
        <path d="M1.800 1.500h2.500v2.500H1.800z" fill="#fff" />
      </svg>
      <svg viewBox="0 0 17 16" className="ml-2 h-4 w-[17px]">
        <path d="M1 5.500h3L8.500 1.500v13L4 10.500H1z" fill="#fff" stroke="#555" />
        <path d="M10.500 5.500q1.500 2.500 0 5M12.500 3.500q3 4.500 0 9M14.500 2q3.500 6 0 12" fill="none" stroke="#777" />
      </svg>
      <svg viewBox="0 0 16 16" className="ml-[7px] h-4 w-4">
        <path d="M2 1v14.500" stroke="#555" strokeWidth="1.500" />
        <path d="M3 2q3-1 5.500.5V4q3 0 6.500-.5L13.500 9q-3 1-5.500 0-2.500-1.500-5 0z" fill="#fff" stroke="#555" />
      </svg>
      <span className="ml-[16px] pt-px tracking-[-0.05px]">1:50 AM</span>
      <Desk className="ml-[10px] h-4 w-4" />
    </div>
  </div>
);

const Watermark = () => (
  <div className="flex h-16 w-[200px] items-center font-['Roboto',sans-serif] text-[51px] leading-none tracking-normal text-white [text-shadow:0_0_3px_#c2c2c2,0_2px_5px_#d0d0d0]">
    <span className="w-[68px] origin-left scale-x-[0.72] font-light">ANY</span>
    <svg viewBox="0 0 62 64" className="h-16 w-[62px] shrink-0 drop-shadow-[0_1px_2px_#b4b4b4]">
      <path d="M16 4v55q1 2 4 0L57 37" fill="none" stroke="#f4f4f4" strokeWidth="3.200" strokeLinejoin="round" />
      <path d="M16 53l36-20" fill="none" stroke="#f0f0f0" strokeWidth="2.500" />
      <path d="M16 53V3L57 27M16 17l37 17" fill="none" stroke="#fff" strokeWidth="3.200" strokeLinejoin="round" />
      <path d="M57 27v9" fill="none" stroke="#fff" strokeWidth="2" />
      <path d="M12 9L6 12v41l5 2" fill="none" stroke="#fff" strokeWidth="3" />
    </svg>
    <span className="-ml-px w-[64px] origin-left scale-x-[0.75] font-light">RUN</span>
  </div>
);

export default function App() {
  return (
    <div className="relative h-[720px] w-[1280px] overflow-hidden bg-[#d4d0c8] font-['DejaVu_Sans_Condensed','DejaVu_Sans',sans-serif] text-[11px] leading-[13px] tracking-[-0.2px] text-black [font-stretch:condensed]">
      <Explorer />
      <Taskbar />
      <div className="absolute top-[69px] left-[800px]">
        <WinRar />
      </div>
      <div className="absolute top-[310px] left-[860px] h-[152px] w-[9px] border-r-2 border-b-2 border-[#505050] bg-[#d4d0c8]" />
      <div className="absolute top-[43px] left-[71px]">
        <DeviceManager />
      </div>
      <div className="absolute top-[297px] left-[434px]">
        <Message />
      </div>
      <div className="absolute top-[609px] left-[1039px]">
        <Watermark />
      </div>
    </div>
  );
}
